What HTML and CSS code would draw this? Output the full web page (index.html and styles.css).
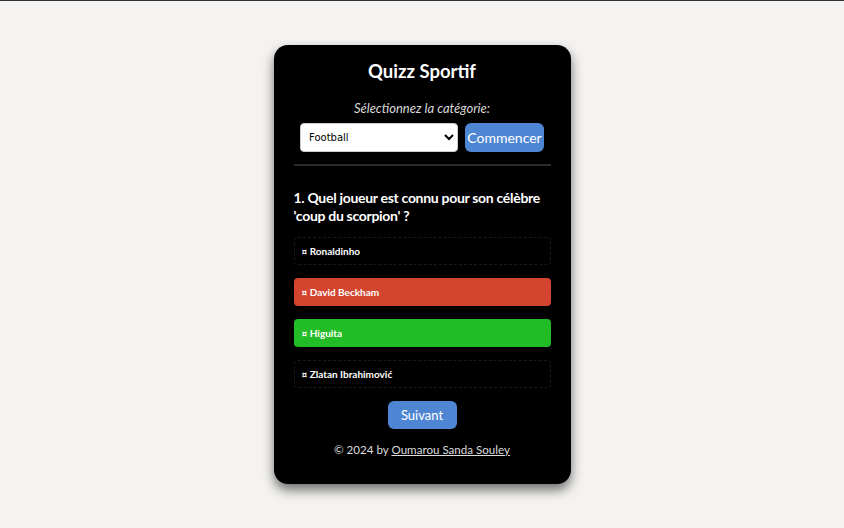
FILE: index.html
```html
<!DOCTYPE html>
<html lang="fr">
<head>
<meta charset="utf-8">
<title>Quizz Sportif</title>
<link rel="stylesheet" href="styles.css">
</head>
<body>
<div class="topline"></div>
<main class="page">
  <div class="card">
    <h1 class="title">Quizz Sportif</h1>
    <p class="label">Sélectionnez la catégorie:</p>
    <div class="controls">
      <select class="select"><option>Football</option></select>
      <button class="btn btn-start">Commencer</button>
    </div>
    <hr class="sep">
    <h2 class="question">1. Quel joueur est connu pour son célèbre 'coup du scorpion' ?</h2>
    <div class="options">
      <div class="option">¤ Ronaldinho</div>
      <div class="option wrong">¤ David Beckham</div>
      <div class="option right">¤ Higuita</div>
      <div class="option">¤ Zlatan Ibrahimović</div>
    </div>
    <div class="next-wrap"><button class="btn btn-next">Suivant</button></div>
    <p class="footer">© 2024 by <a href="#" class="link">Oumarou Sanda Souley</a></p>
  </div>
</main>
</body>
</html>
```
FILE: styles.css
```css
html, body { margin: 0; padding: 0; }
body {
  background: #f4f3f1;
  font-family: "Lato", "DejaVu Sans", sans-serif;
  height: 528px;
  overflow: hidden;
}
.topline { height: 1px; background: #2f3133; }
.page { display: flex; justify-content: center; padding-top: 44px; }
.card {
  width: 257px;
  background: #000;
  border-radius: 14px;
  padding: 13px 20px 26px;
  box-shadow: 0 6px 12px rgba(0,0,0,0.55);
  color: #fff;
}
.title {
  margin: 0;
  text-align: center;
  font-size: 18.5px;
  font-weight: bold;
  line-height: 26px;
}
.label {
  margin: 16px 0 0;
  text-align: center;
  font-style: italic;
  font-size: 13px;
  line-height: 16px;
  color: #d8d8d8;
}
.controls { display: flex; justify-content: center; gap: 7px; margin-top: 7px; }
.select {
  width: 158px; height: 29px;
  background: #fff; color: #000;
  border: 1px solid #ccc; border-radius: 4px;
  font-family: "DejaVu Sans", sans-serif; font-size: 10px;
  padding: 0 4px;
}
.btn {
  background: #4f86d3; color: #fff; border: none; border-radius: 6px;
  font-family: "Lato", "DejaVu Sans", sans-serif;
}
.btn-start { width: 79px; height: 29px; font-size: 14px; padding: 0; }
.sep { border: none; height: 2px; background: #2a2a2a; margin: 12px 0 0; }
.question {
  margin: 23px 0 0;
  font-size: 14px; font-weight: bold; line-height: 18px;
  letter-spacing: -0.3px;
}
.options { display: flex; flex-direction: column; gap: 13px; margin-top: 12px; }
.option {
  height: 26px; border: 1px dashed #191919; border-radius: 4px;
  padding-left: 7px; display: flex; align-items: center;
  font-size: 10px; font-weight: bold;
}
.option.wrong { background: #d4452f; border-color: #d4452f; }
.option.right { background: #22bc26; border-color: #22bc26; }
.next-wrap { display: flex; justify-content: center; margin-top: 13px; }
.btn-next { width: 69px; height: 28px; font-size: 13px; }
.footer { margin: 13px 0 0; text-align: center; font-size: 11.6px; color: #dcdcdc; line-height: 16px; }
.link { color: #dcdcdc; }
```
